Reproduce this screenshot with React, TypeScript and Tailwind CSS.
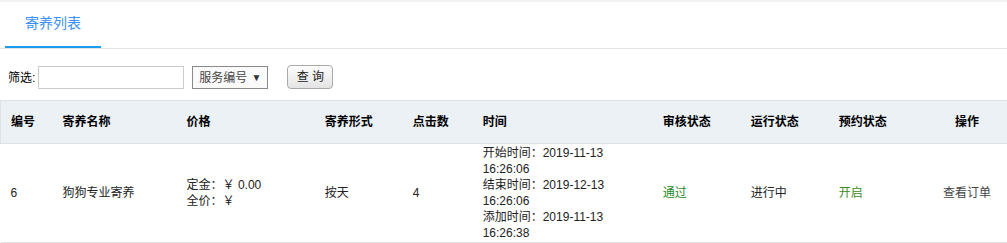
import React from "react";

const COLS = [
  { label: "编号", w: "w-[52px]" },
  { label: "寄养名称", w: "w-[124px]" },
  { label: "价格", w: "w-[138px]" },
  { label: "寄养形式", w: "w-[88px]" },
  { label: "点击数", w: "w-[70px]" },
  { label: "时间", w: "w-[180px]" },
  { label: "审核状态", w: "w-[88px]" },
  { label: "运行状态", w: "w-[88px]" },
  { label: "预约状态", w: "w-[88px]" },
  { label: "操作", w: "w-[90px]", center: true },
];

export default function App() {
  return (
    <div className="w-[1007px] h-[243px] bg-white overflow-hidden text-[12px] text-[#222] font-['Liberation_Sans','Noto_Sans_CJK_SC',sans-serif]">
      {/* tabs */}
      <div className="border-t-2 border-[#f2f2f2] border-b border-b-[#e4e4e4] h-[49px] flex pl-[5px]">
        <div className="w-[96px] flex flex-col">
          <div className="flex-1 flex items-center justify-center text-[14px] text-[#3b8ff5] pb-[2px]">寄养列表</div>
          <div className="h-[2px] bg-[#1a9bf0]" />
        </div>
      </div>

      {/* filter */}
      <div className="flex items-center h-[51px] pl-[8px] pt-[6px]">
        <span className="text-[12px] text-black">筛选:</span>
        <input className="ml-[3px] w-[146px] h-[23px] border border-[#cccccc] outline-none" />
        <div className="ml-[8px] w-[76px] h-[23px] border border-[#8a8a8a] bg-[#fafafa] flex items-center px-[6px] text-[12px] text-[#444]">
          <span>服务编号</span>
          <span className="ml-auto text-[10px] text-[#333]">▼</span>
        </div>
        <button className="ml-[19px] w-[46px] h-[24px] -mt-[1px] rounded-[4px] border border-[#a9a9a9] bg-gradient-to-b from-[#fdfdfd] to-[#e4e4e4] text-[12px] text-[#222]">
          查 询
        </button>
      </div>

      {/* table */}
      <table className="border-collapse w-[1007px] table-fixed">
        <thead>
          <tr className="bg-[#ecf1f6] h-[43px]">
            {COLS.map((c) => (
              <th
                key={c.label}
                className={`${c.w} border-y border-[#dde2e7] font-bold text-black ${c.center ? "text-center pl-[20px] pr-[10px]" : "text-left px-[10px]"} first:border-l`}
              >
                {c.label}
              </th>
            ))}
          </tr>
        </thead>
        <tbody>
          <tr className="h-[98px] leading-[16px] text-[#222]">
            <td className="px-[10px] border-b border-[#e2e2e2]">6</td>
            <td className="px-[10px] border-b border-[#e2e2e2]">狗狗专业寄养</td>
            <td className="px-[10px] border-b border-[#e2e2e2]">
              <div>定金：￥ 0.00</div>
              <div>全价：￥</div>
            </td>
            <td className="px-[10px] border-b border-[#e2e2e2]">按天</td>
            <td className="px-[10px] border-b border-[#e2e2e2]">4</td>
            <td className="px-[10px] pr-[40px] py-[1px] border-b border-[#e2e2e2]">
              <div>开始时间：2019-11-13 16:26:06</div>
              <div>结束时间：2019-12-13 16:26:06</div>
              <div>添加时间：2019-11-13 16:26:38</div>
            </td>
            <td className="px-[10px] border-b border-[#e2e2e2] text-[#1f8a1f]">通过</td>
            <td className="px-[10px] border-b border-[#e2e2e2]">进行中</td>
            <td className="px-[10px] border-b border-[#e2e2e2] text-[#3c8c1c]">开启</td>
            <td className="pl-[20px] pr-[10px] border-b border-[#e2e2e2] text-center text-[#444]">查看订单</td>
          </tr>
        </tbody>
      </table>
    </div>
  );
}
